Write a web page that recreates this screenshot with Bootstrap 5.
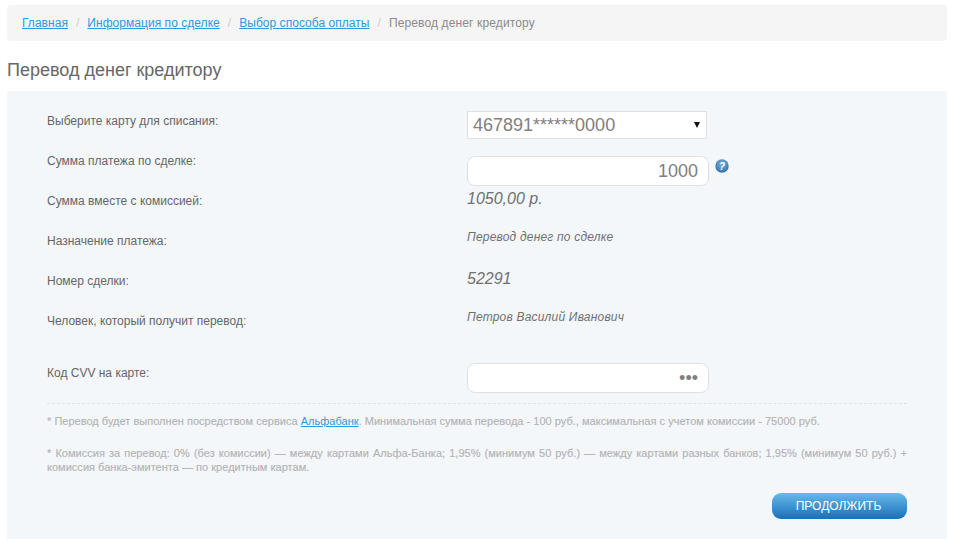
<!DOCTYPE html>
<html lang="ru">
<head>
<meta charset="utf-8">
<title>Перевод денег кредитору</title>
<link href="https://cdn.jsdelivr.net/npm/bootstrap@5.3.0/dist/css/bootstrap.min.css" rel="stylesheet">
<style>
html,body{height:543px;overflow:hidden}
body{background:#fff;font-family:"Liberation Sans",Arial,sans-serif;font-size:12px;color:#666;padding:5px 6px 0 7px}
.crumbs{background:#f5f5f5;border-radius:4px;height:36px;margin:0;padding:0 15px;font-size:12px;align-items:center;letter-spacing:.04px}
.crumbs a{color:#2a9be0}
.crumbs .breadcrumb-item+.breadcrumb-item::before{color:#ccc}
.crumbs .breadcrumb-item.active{color:#8a8a8a;letter-spacing:.13px}
.crumbs .breadcrumb-item+.breadcrumb-item{padding-left:8px}
.crumbs .breadcrumb-item+.breadcrumb-item::before{padding-right:8px}
.pagetitle{font-size:18px;font-weight:400;color:#666;line-height:20px;margin:19px 0 11px;font-family:"Liberation Sans",sans-serif}
.formpanel{background:#f4f7fa;padding:9px 40px 0;height:448px}
.frow{height:40px;display:flex}
.frow.tall{height:52px;padding-top:12px}
.flabel{width:420px;padding-top:14px;line-height:14px;color:#666;flex:none}
.fvalue{flex:none;font-style:italic;color:#707070}
.bigv{font-size:16px;line-height:18px;padding-top:10px}
.smallv{font-size:12px;line-height:14px;padding-top:10px;letter-spacing:.2px}
.cardsel{width:240px;height:28px;border:1px solid #dfe1e4;background:#fff;border-radius:0;font-size:18px;line-height:24px;color:#808080;padding:0 5px;margin-top:11px;display:flex;align-items:center;justify-content:space-between;font-style:normal}
.cardsel i{width:0;height:0;border-left:3.5px solid transparent;border-right:3.5px solid transparent;border-top:6px solid #111;margin-right:1px}
.amount{width:242px;height:30px;border:1px solid #dfe1e4;border-radius:8px;background:#fff;font-size:18px;color:#808080;text-align:right;padding:0 10px;box-shadow:none}
.amountwrap{padding-top:16px;display:flex;gap:6px;align-items:flex-start}
.helpicon{margin-top:3px;flex:none}
.cvvwrap{padding-top:11px}
.cvvwrap .amount{font-size:18px;letter-spacing:0}
.notes{border-top:1px dashed #dfe3e8;margin-top:11px;padding-top:10px;font-size:11px;color:#b3b3b3;line-height:14px;letter-spacing:.02px;-webkit-text-stroke:.15px #b3b3b3}
.notes a{color:#2a9be0;-webkit-text-stroke:0}
.notes p{margin:0 0 18px}
.notes p.just{text-align:justify;margin-bottom:19px}
.gobtn{width:135px;height:26px;border-radius:9px;border:0;padding:0 2px 0 0;font-size:12px;color:#fff;background:linear-gradient(#68b9ea,#1a6fb9)}
.gobtn:hover{color:#fff;background:linear-gradient(#68b9ea,#1a6fb9)}
</style>
</head>
<body>
<nav aria-label="breadcrumb">
<ol class="breadcrumb crumbs d-flex">
<li class="breadcrumb-item"><a href="#">Главная</a></li>
<li class="breadcrumb-item"><a href="#">Информация по сделке</a></li>
<li class="breadcrumb-item"><a href="#">Выбор способа оплаты</a></li>
<li class="breadcrumb-item active" aria-current="page">Перевод денег кредитору</li>
</ol>
</nav>
<h1 class="pagetitle">Перевод денег кредитору</h1>
<div class="formpanel">
<div class="frow"><div class="flabel">Выберите карту для списания:</div><div class="fvalue"><div class="cardsel"><span>467891******0000</span><i></i></div></div></div>
<div class="frow"><div class="flabel">Сумма платежа по сделке:</div><div class="fvalue amountwrap"><input class="form-control amount" value="1000">
<svg class="helpicon" width="14" height="14" viewBox="0 0 14 14"><defs><radialGradient id="hg" cx=".5" cy=".35" r=".7"><stop offset="0" stop-color="#7fb4e0"/><stop offset="1" stop-color="#2a6aa8"/></radialGradient></defs><circle cx="7" cy="7" r="6.7" fill="url(#hg)"/><text x="7" y="10.5" text-anchor="middle" font-family="Liberation Sans" font-size="10" font-weight="700" fill="#fff">?</text></svg></div></div>
<div class="frow"><div class="flabel">Сумма вместе с комиссией:</div><div class="fvalue bigv">1050,00 р.</div></div>
<div class="frow"><div class="flabel">Назначение платежа:</div><div class="fvalue smallv">Перевод денег по сделке</div></div>
<div class="frow"><div class="flabel">Номер сделки:</div><div class="fvalue bigv">52291</div></div>
<div class="frow"><div class="flabel">Человек, который получит перевод:</div><div class="fvalue smallv">Петров Василий Иванович</div></div>
<div class="frow tall"><div class="flabel">Код CVV на карте:</div><div class="fvalue cvvwrap"><input class="form-control amount" type="password" value="123"></div></div>
<div class="notes">
<p>* Перевод будет выполнен посредством сервиса <a href="#">Альфабанк</a>. Минимальная сумма перевода - 100 руб., максимальная с учетом комиссии - 75000 руб.</p>
<p class="just">* Комиссия за перевод: 0% (без комиссии) — между картами Альфа-Банка; 1,95% (минимум 50 руб.) — между картами разных банков; 1,95% (минимум 50 руб.) + комиссия банка-эмитента — по кредитным картам.</p>
</div>
<div class="d-flex justify-content-end"><button class="btn gobtn" type="button">ПРОДОЛЖИТЬ</button></div>
</div>
<script src="https://cdn.jsdelivr.net/npm/bootstrap@5.3.0/dist/js/bootstrap.bundle.min.js"></script>
</body>
</html>
